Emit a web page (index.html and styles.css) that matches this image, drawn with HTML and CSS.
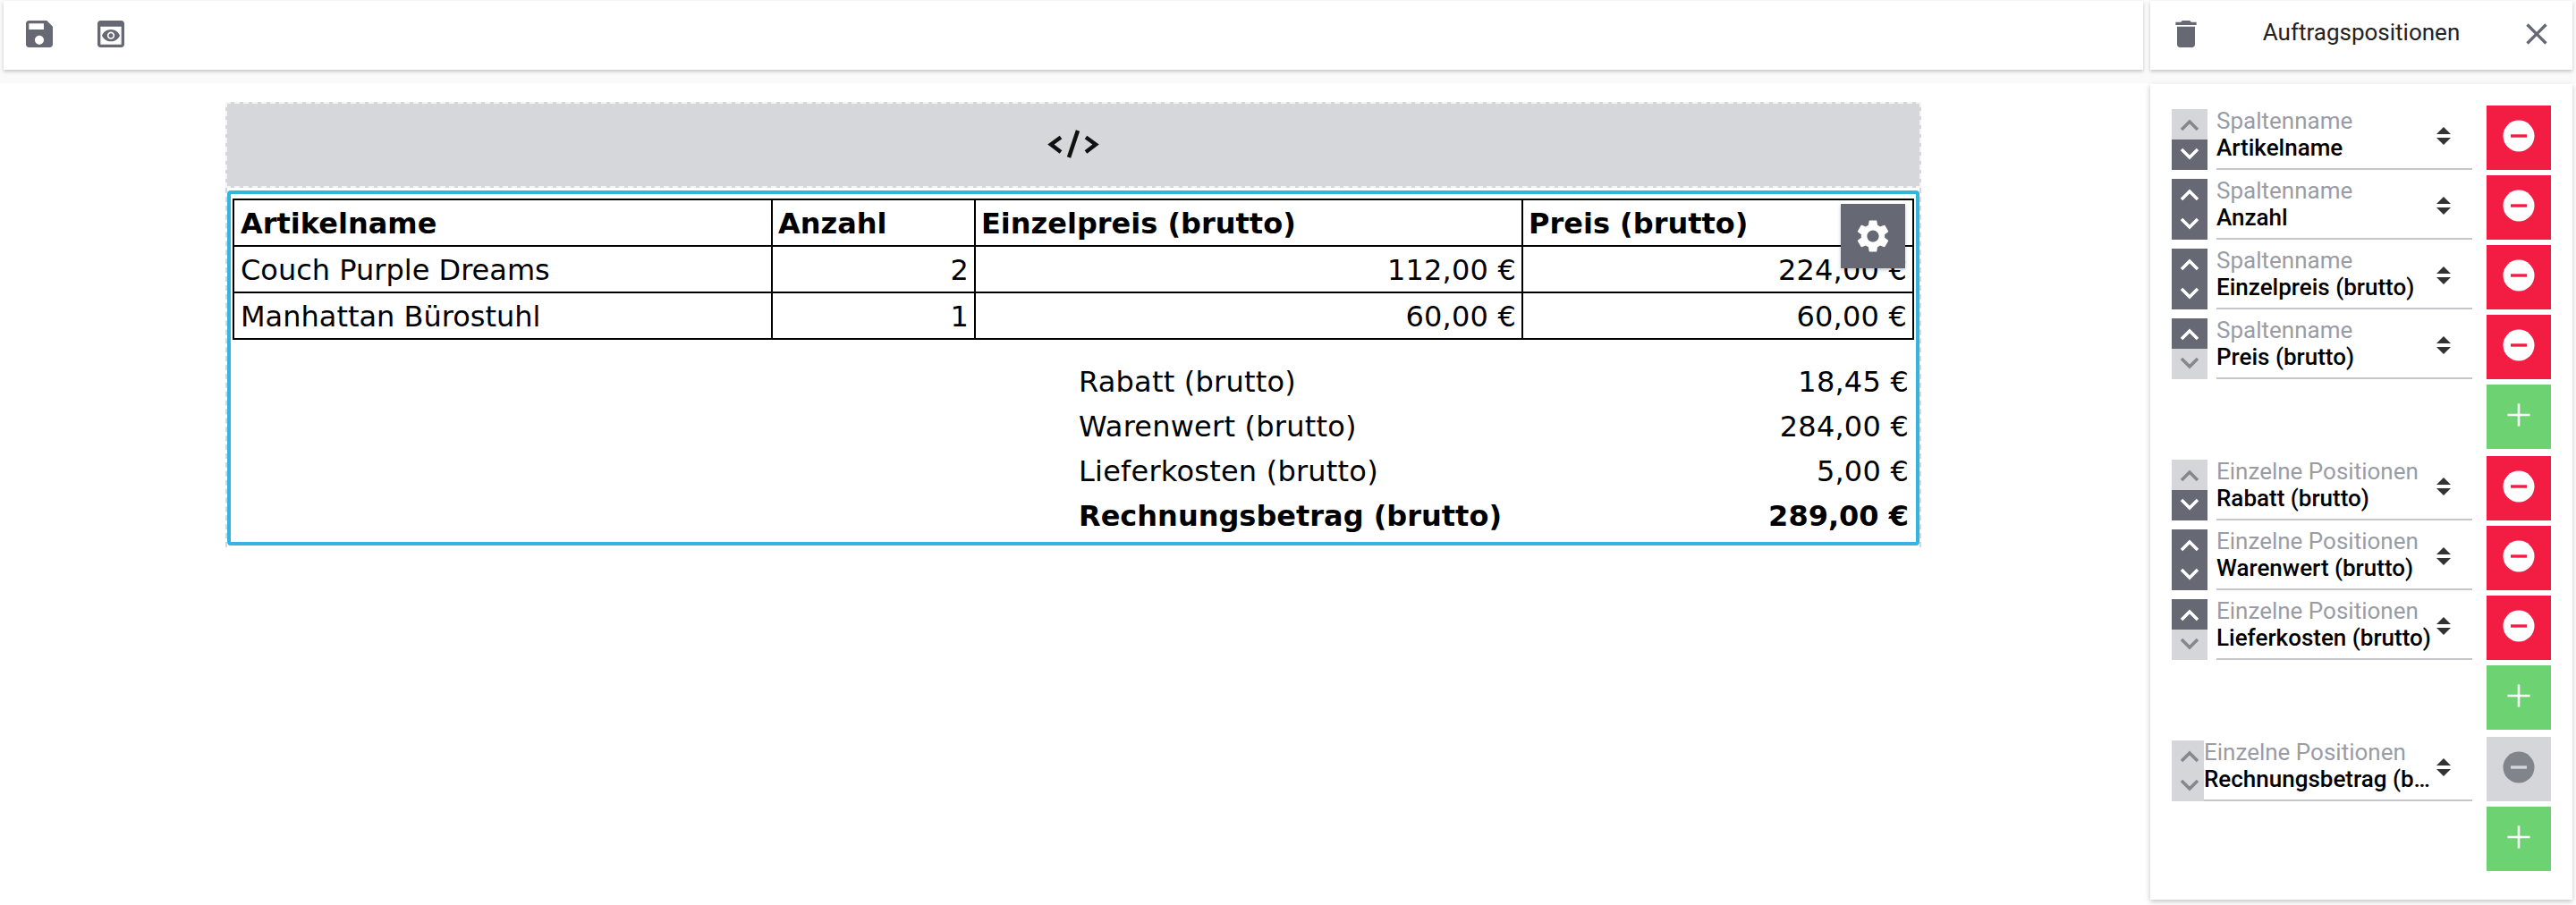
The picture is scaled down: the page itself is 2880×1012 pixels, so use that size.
FILE: index.html
```html
<!doctype html>

<html>
<head>
    <meta charset="utf-8">
    <title>Auftragspositionen</title>
    <link rel="stylesheet" href="styles.css">
</head>

<body>
<svg class="sprites" width="0" height="0">
    <symbol id="i-save" viewBox="0 0 24 24"><path d="M17 3H5c-1.11 0-2 .9-2 2v14c0 1.1.89 2 2 2h14c1.1 0 2-.9 2-2V7l-4-4zm-5 16c-1.66 0-3-1.34-3-3s1.34-3 3-3 3 1.34 3 3-1.34 3-3 3zm3-10H5V5h10v4z"/></symbol>
    <symbol id="i-preview" viewBox="0 0 24 24"><path d="M19 3H5c-1.11 0-2 .9-2 2v14c0 1.1.89 2 2 2h14c1.1 0 2-.9 2-2V5c0-1.1-.89-2-2-2zm0 16H5V7h14v12zm-5.5-6c0 .83-.67 1.5-1.5 1.5s-1.5-.67-1.5-1.5.67-1.5 1.5-1.5 1.5.67 1.5 1.5zM12 9c-2.73 0-5.06 1.66-6 4 .94 2.34 3.27 4 6 4s5.06-1.66 6-4c-.94-2.34-3.27-4-6-4zm0 6.5c-1.38 0-2.5-1.12-2.5-2.5s1.12-2.5 2.5-2.5 2.5 1.12 2.5 2.5-1.12 2.5-2.5 2.5z"/></symbol>
    <symbol id="i-delete" viewBox="0 0 24 24"><path d="M6 19c0 1.1.9 2 2 2h8c1.1 0 2-.9 2-2V7H6v12zM19 4h-3.5l-1-1h-5l-1 1H5v2h14V4z"/></symbol>
    <symbol id="i-close" viewBox="0 0 24 24"><path d="M19 6.41L17.59 5 12 10.59 6.41 5 5 6.41 10.59 12 5 17.59 6.41 19 12 13.41 17.59 19 19 17.59 13.41 12z"/></symbol>
    <symbol id="i-gear" viewBox="0 0 24 24"><path d="M19.14 12.94c.04-.3.06-.61.06-.94 0-.32-.02-.64-.07-.94l2.03-1.58c.18-.14.23-.41.12-.61l-1.92-3.32c-.12-.22-.37-.29-.59-.22l-2.39.96c-.5-.38-1.03-.7-1.62-.94l-.36-2.54c-.04-.24-.24-.41-.48-.41h-3.84c-.24 0-.43.17-.47.41l-.36 2.54c-.59.24-1.13.57-1.62.94l-2.39-.96c-.22-.08-.47 0-.59.22L2.74 8.87c-.12.21-.08.47.12.61l2.03 1.58c-.05.3-.09.63-.09.94s.02.64.07.94l-2.03 1.58c-.18.14-.23.41-.12.61l1.92 3.32c.12.22.37.29.59.22l2.39-.96c.5.38 1.03.7 1.62.94l.36 2.54c.05.24.24.41.48.41h3.84c.24 0 .44-.17.47-.41l.36-2.54c.59-.24 1.13-.56 1.62-.94l2.39.96c.22.08.47 0 .59-.22l1.92-3.32c.12-.22.07-.47-.12-.61l-2.01-1.58zM12 15.6c-1.98 0-3.6-1.62-3.6-3.6s1.62-3.6 3.6-3.6 3.6 1.62 3.6 3.6-1.62 3.6-3.6 3.6z"/></symbol>
    <symbol id="i-code" viewBox="0 0 60 36"><path d="M16 10.5L5 18.5L16 27M35 3L25 33M44 10.5L55 18.5L44 27" fill="none" stroke="currentColor" stroke-width="4.5"/></symbol>
    <symbol id="i-up" viewBox="0 0 40 34"><path d="M11 23L20 14L29 23" fill="none" stroke="currentColor" stroke-width="3.5"/></symbol>
    <symbol id="i-down" viewBox="0 0 40 34"><path d="M11 11L20 20L29 11" fill="none" stroke="currentColor" stroke-width="3.5"/></symbol>
    <symbol id="i-sort" viewBox="0 0 16 20"><path d="M8 0L16 8H0zM0 12H16L8 20z"/></symbol>
    <symbol id="i-minus" viewBox="0 0 72 72"><circle cx="36" cy="34" r="17.5" fill="var(--disc)"/><rect x="27" y="32.3" width="18" height="3.4" fill="var(--bar)"/></symbol>
    <symbol id="i-plus" viewBox="0 0 72 72"><path d="M23.5 34H48.5M36 21.5V46.5" fill="none" stroke="#fff" stroke-width="2.6"/></symbol>
</svg>

<div class="topbars">
    <div class="bar">
        <button class="bar-btn"><svg class="icon40"><use href="#i-save"/></svg></button>
        <button class="bar-btn"><svg class="icon40"><use href="#i-preview"/></svg></button>
    </div>
    <div class="bar bar-side">
        <button class="bar-btn"><svg class="icon40"><use href="#i-delete"/></svg></button>
        <span class="bar-title">Auftragspositionen</span>
        <button class="bar-btn"><svg class="icon40"><use href="#i-close"/></svg></button>
    </div>
</div>

<div class="content">
    <main class="canvas">
        <div class="html-block"><svg class="code-icon"><use href="#i-code"/></svg></div>
        <div class="dash-frame">
            <div class="selected">
                <button class="gear"><svg class="gear-icon"><use href="#i-gear"/></svg></button>
                <table class="items">
                    <thead>
                    <tr>
                        <th class="col-name">Artikelname</th>
                        <th class="col-qty">Anzahl</th>
                        <th class="col-unit">Einzelpreis (brutto)</th>
                        <th>Preis (brutto)</th>
                    </tr>
                    </thead>
                    <tbody>
                    <tr>
                        <td class="first">Couch Purple Dreams</td>
                        <td class="num">2</td>
                        <td class="num">112,00 €</td>
                        <td class="num">224,00 €</td>
                    </tr>
                    <tr>
                        <td class="first">Manhattan Bürostuhl</td>
                        <td class="num">1</td>
                        <td class="num">60,00 €</td>
                        <td class="num">60,00 €</td>
                    </tr>
                    </tbody>
                </table>
                <div class="totals">
                    <div class="total-row"><span>Rabatt (brutto)</span><span>18,45 €</span></div>
                    <div class="total-row"><span>Warenwert (brutto)</span><span>284,00 €</span></div>
                    <div class="total-row"><span>Lieferkosten (brutto)</span><span>5,00 €</span></div>
                    <div class="total-row total-sum"><span>Rechnungsbetrag (brutto)</span><span>289,00 €</span></div>
                </div>
            </div>
        </div>
    </main>

    <aside class="side">
        <div class="side-panel">
            <section class="group">
                <div class="pos">
                    <div class="arrows"><span class="arrow off"><svg><use href="#i-up"/></svg></span><span class="arrow"><svg><use href="#i-down"/></svg></span></div>
                    <div class="field"><div class="field-text"><div class="field-label">Spaltenname</div><div class="field-value">Artikelname</div></div><svg class="sort"><use href="#i-sort"/></svg></div>
                    <button class="square red"><svg><use href="#i-minus"/></svg></button>
                </div>
                <div class="pos">
                    <div class="arrows"><span class="arrow"><svg><use href="#i-up"/></svg></span><span class="arrow"><svg><use href="#i-down"/></svg></span></div>
                    <div class="field"><div class="field-text"><div class="field-label">Spaltenname</div><div class="field-value">Anzahl</div></div><svg class="sort"><use href="#i-sort"/></svg></div>
                    <button class="square red"><svg><use href="#i-minus"/></svg></button>
                </div>
                <div class="pos">
                    <div class="arrows"><span class="arrow"><svg><use href="#i-up"/></svg></span><span class="arrow"><svg><use href="#i-down"/></svg></span></div>
                    <div class="field"><div class="field-text"><div class="field-label">Spaltenname</div><div class="field-value">Einzelpreis (brutto)</div></div><svg class="sort"><use href="#i-sort"/></svg></div>
                    <button class="square red"><svg><use href="#i-minus"/></svg></button>
                </div>
                <div class="pos">
                    <div class="arrows"><span class="arrow"><svg><use href="#i-up"/></svg></span><span class="arrow off"><svg><use href="#i-down"/></svg></span></div>
                    <div class="field"><div class="field-text"><div class="field-label">Spaltenname</div><div class="field-value">Preis (brutto)</div></div><svg class="sort"><use href="#i-sort"/></svg></div>
                    <button class="square red"><svg><use href="#i-minus"/></svg></button>
                </div>
                <button class="square green"><svg><use href="#i-plus"/></svg></button>
            </section>

            <section class="group">
                <div class="pos">
                    <div class="arrows"><span class="arrow off"><svg><use href="#i-up"/></svg></span><span class="arrow"><svg><use href="#i-down"/></svg></span></div>
                    <div class="field"><div class="field-text"><div class="field-label">Einzelne Positionen</div><div class="field-value">Rabatt (brutto)</div></div><svg class="sort"><use href="#i-sort"/></svg></div>
                    <button class="square red"><svg><use href="#i-minus"/></svg></button>
                </div>
                <div class="pos">
                    <div class="arrows"><span class="arrow"><svg><use href="#i-up"/></svg></span><span class="arrow"><svg><use href="#i-down"/></svg></span></div>
                    <div class="field"><div class="field-text"><div class="field-label">Einzelne Positionen</div><div class="field-value">Warenwert (brutto)</div></div><svg class="sort"><use href="#i-sort"/></svg></div>
                    <button class="square red"><svg><use href="#i-minus"/></svg></button>
                </div>
                <div class="pos">
                    <div class="arrows"><span class="arrow"><svg><use href="#i-up"/></svg></span><span class="arrow off"><svg><use href="#i-down"/></svg></span></div>
                    <div class="field"><div class="field-text"><div class="field-label">Einzelne Positionen</div><div class="field-value">Lieferkosten (brutto)</div></div><svg class="sort"><use href="#i-sort"/></svg></div>
                    <button class="square red"><svg><use href="#i-minus"/></svg></button>
                </div>
                <button class="square green"><svg><use href="#i-plus"/></svg></button>
            </section>

            <section class="group">
                <div class="pos pos-tight">
                    <div class="arrows"><span class="arrow off"><svg><use href="#i-up"/></svg></span><span class="arrow off"><svg><use href="#i-down"/></svg></span></div>
                    <div class="field"><div class="field-text"><div class="field-label">Einzelne Positionen</div><div class="field-value">Rechnungsbetrag (brutto)</div></div><svg class="sort"><use href="#i-sort"/></svg></div>
                    <button class="square grey"><svg><use href="#i-minus"/></svg></button>
                </div>
                <button class="square green"><svg><use href="#i-plus"/></svg></button>
            </section>
        </div>
    </aside>
</div>
</body>
</html>
```

FILE: styles.css
```css
* {
    box-sizing: border-box;
}
html, body {
    margin: 0;
    height: 1012px;
    overflow: hidden;
}
body {
    background: #fff;
    color: #000;
    font-family: "Roboto", sans-serif;
}
button {
    border: none;
    background: none;
    padding: 0;
    margin: 0;
    display: flex;
    align-items: center;
    justify-content: center;
    flex: none;
}
.sprites {
    position: absolute;
}

/* top bars */
.topbars {
    display: grid;
    grid-template-columns: 2400px 480px;
    height: 93px;
    padding-top: 1px;
    background: #fafafa;
}
.bar {
    display: flex;
    height: 77px;
    margin: 0 4px;
    background: #fff;
    box-shadow: 0 2px 4px rgba(0, 0, 0, .22);
}
.bar-side {
    justify-content: space-between;
    align-items: flex-start;
}
.bar-btn {
    width: 80px;
    height: 74px;
    color: #666873;
}
.bar-title {
    font-size: 26px;
    line-height: 74px;
    color: #222;
    margin-top: -2px;
}
.icon40 {
    width: 40px;
    height: 40px;
    fill: currentColor;
}

.content {
    display: flex;
}

/* canvas */
.canvas {
    width: 2400px;
    padding: 21px 0 0 252px;
}
.html-block {
    width: 1896px;
    height: 96px;
    display: flex;
    align-items: center;
    justify-content: center;
    background: #d6d7db;
    border: 2px dashed #f4f4f5;
    color: #111;
}
.code-icon {
    width: 60px;
    height: 36px;
    margin-top: -2px;
}
.dash-frame {
    width: 1896px;
    padding: 3px 0 2px;
    border-left: 2px dashed #d6d7db;
    border-right: 2px dashed #d6d7db;
}
.selected {
    position: relative;
    height: 397px;
    padding: 5px 2px 0;
    border: 4px solid #33b5e0;
    border-radius: 4px;
    font-family: "DejaVu Sans", "Verdana", sans-serif;
    font-size: 32px;
}
.gear {
    position: absolute;
    top: 11px;
    right: 12px;
    width: 72px;
    height: 72px;
    background: #666873;
    box-shadow: 0 2px 4px rgba(0, 0, 0, .2);
    z-index: 1;
}
.gear-icon {
    width: 44px;
    height: 44px;
    fill: #fff;
}

.items {
    width: 1880px;
    table-layout: fixed;
    border-collapse: collapse;
}
.items th, .items td {
    height: 52px;
    padding: 2px 6px 0;
    border: 2px solid #000;
    text-align: left;
    line-height: 38px;
}
.items .col-name, .items .first {
    padding-left: 7px;
}
.items .num {
    text-align: right;
    letter-spacing: .2px;
}
.col-name {
    width: 602px;
}
.col-qty {
    width: 227px;
}
.col-unit {
    width: 612px;
}

.totals {
    width: 928px;
    margin: 22px 6px 0 auto;
}
.total-row {
    display: flex;
    justify-content: space-between;
    height: 50px;
    line-height: 50px;
    letter-spacing: .22px;
}
.total-sum {
    font-weight: bold;
    letter-spacing: 0;
}

/* side panel */
.side {
    width: 480px;
    padding: 1px 4px 0;
}
.side-panel {
    height: 912px;
    padding: 24px 24px 0;
    display: flex;
    flex-direction: column;
    gap: 8px;
    background: #fff;
    box-shadow: 0 2px 6px rgba(0, 0, 0, .25);
}
.group {
    display: flex;
    flex-direction: column;
    align-items: flex-end;
    gap: 6px;
}
.pos {
    width: 100%;
    display: flex;
    align-items: flex-end;
}
.arrows {
    width: 40px;
    margin-right: 10px;
    flex: none;
}
.pos-tight .arrows {
    width: 36px;
    margin-right: 0;
}
.arrow {
    display: block;
    height: 34px;
    background: #666873;
    color: #fff;
}
.arrow svg {
    display: block;
    width: 40px;
    height: 34px;
    overflow: visible;
}
.arrow.off {
    background: #d5d6da;
    color: #85868e;
}
.field {
    flex: 1;
    min-width: 0;
    height: 68px;
    margin-right: 16px;
    display: flex;
    align-items: center;
    border-bottom: 2px solid #c5c5cc;
}
.field-text {
    flex: 1;
    min-width: 0;
    font-size: 26px;
    line-height: 30px;
    margin-top: -10px;
}
.field-label {
    color: #9a9ca5;
}
.field-value {
    font-weight: 500;
    white-space: nowrap;
    overflow: hidden;
    text-overflow: ellipsis;
}
.sort {
    width: 16px;
    height: 20px;
    flex: none;
    margin: -6px 24px 0 6px;
    fill: #333;
}
.square {
    width: 72px;
    height: 72px;
}
.square svg {
    width: 72px;
    height: 72px;
}
.red {
    background: #f31d43;
    --disc: #fff;
    --bar: #f31d43;
}
.green {
    background: #6dd271;
}
.grey {
    background: #d5d6da;
    --disc: #82848c;
    --bar: #d5d6da;
}
```
